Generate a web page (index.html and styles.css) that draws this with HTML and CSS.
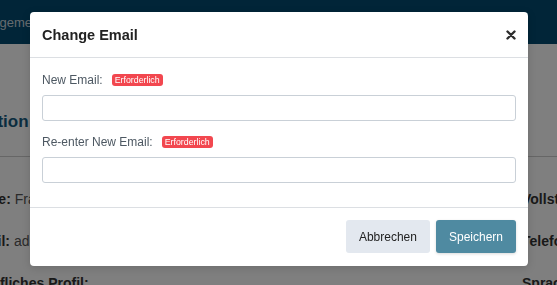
FILE: index.html
```html
<!doctype html>
<html lang="de">
  <head>
    <meta charset="UTF-8" />
    <meta name="viewport" content="width=device-width, initial-scale=1.0" />
    <title>Change Email</title>
    <link rel="stylesheet" href="styles.css">
  </head>
  <body>
    <div class="page">
      <div class="navbar">
        <span class="nav-link">Management</span>
      </div>
      <div class="content">
        <h2 class="page-title">Kontoinformation</h2>
        <div class="info-grid">
          <div class="info-row"><strong>Name:</strong> Frank Müller</div>
          <div class="info-row"><strong>Vollständiger Name:</strong></div>
          <div class="info-row"><strong>Email:</strong> admin@example.de</div>
          <div class="info-row"><strong>Telefon:</strong></div>
          <div class="info-row"><strong>Berufliches Profil:</strong></div>
          <div class="info-row"><strong>Sprache:</strong></div>
        </div>
      </div>
    </div>

    <div class="backdrop"></div>

    <div class="modal">
      <div class="modal-header">
        <h3>Change Email</h3>
        <button class="close-btn" aria-label="Schließen">
          <svg width="10" height="10" viewBox="0 0 10 10">
            <path d="M1.5 1.5 L8.5 8.5 M8.5 1.5 L1.5 8.5" stroke="#2d2d2d" stroke-width="2.4" stroke-linecap="round" />
          </svg>
        </button>
      </div>
      <div class="modal-body">
        <div class="form-group">
          <label>New Email: <span class="badge">Erforderlich</span></label>
          <input type="email" class="input" />
        </div>
        <div class="form-group">
          <label>Re-enter New Email: <span class="badge">Erforderlich</span></label>
          <input type="email" class="input" />
        </div>
      </div>
      <div class="modal-footer">
        <button class="button button-secondary">Abbrechen</button>
        <button class="button">Speichern</button>
      </div>
    </div>
  </body>
</html>
```

FILE: styles.css
```css
body {
  font-family: "Liberation Sans", Arial, sans-serif;
  background-color: white;
  margin: 0;
  padding: 0;
  overflow: hidden;
}
.navbar {
  background-color: #034a70;
  height: 44px;
  display: flex;
  align-items: center;
  white-space: nowrap;
}
.nav-link {
  color: #c9d6de;
  font-size: 13px;
  margin-left: -33px;
}
.content {
  margin-left: -32px;
  white-space: nowrap;
}
.page-title {
  color: #155a80;
  font-size: 17px;
  font-weight: bold;
  margin: 0 0 0 -82px;
  padding: 68px 0 24px;
  border-bottom: 1px solid #ccc;
}
.info-grid {
  display: grid;
  grid-template-columns: 554px 1fr;
  row-gap: 26px;
  padding-top: 34px;
  font-size: 14px;
  line-height: 16px;
  color: #555;
}
.info-row strong {
  color: #333;
}
.backdrop {
  position: fixed;
  inset: 0;
  background-color: rgba(0, 0, 0, 0.5);
}
.modal {
  position: fixed;
  left: 30px;
  top: 12px;
  width: 498px;
  background-color: white;
  border-radius: 4px;
  box-shadow: 0 2px 8px rgba(0, 0, 0, 0.15);
}
.modal-header {
  display: flex;
  align-items: center;
  justify-content: space-between;
  height: 45px;
  padding: 0 12px;
  border-bottom: 1px solid #dcdfe3;
}
.modal-header h3 {
  margin: 0;
  font-size: 14.5px;
  font-weight: bold;
  color: #222;
}
.close-btn {
  background: none;
  border: none;
  padding: 0;
  width: 10px;
  height: 10px;
  display: flex;
  cursor: pointer;
}
.modal-body {
  padding: 15px 12px 12px;
}
.form-group {
  margin-bottom: 14px;
}
.form-group:last-child {
  margin-bottom: 12px;
}
.form-group label {
  display: flex;
  align-items: center;
  gap: 9px;
  height: 14px;
  margin-bottom: 8px;
  font-size: 12px;
  color: #4d5862;
}
.badge {
  display: inline-block;
  background-color: #f2474f;
  color: white;
  font-size: 8.8px;
  line-height: 12px;
  padding: 0 3px;
  border-radius: 3px;
}
.input {
  display: block;
  box-sizing: border-box;
  width: 100%;
  height: 26px;
  border: 1px solid #c9d0d7;
  border-radius: 3px;
  margin: 0;
}
.modal-footer {
  display: flex;
  justify-content: flex-end;
  gap: 6px;
  padding: 12px 12px 13px;
  border-top: 1px solid #dcdfe3;
}
.button {
  font-family: inherit;
  font-size: 12px;
  height: 33px;
  padding: 0 13px;
  border: none;
  border-radius: 3px;
  background-color: #4f8aa1;
  color: white;
  box-shadow: 0 1px 3px rgba(0, 0, 0, 0.15);
  cursor: pointer;
}
.button-secondary {
  background-color: #e3e8ef;
  color: #222;
  box-shadow: none;
}
```
